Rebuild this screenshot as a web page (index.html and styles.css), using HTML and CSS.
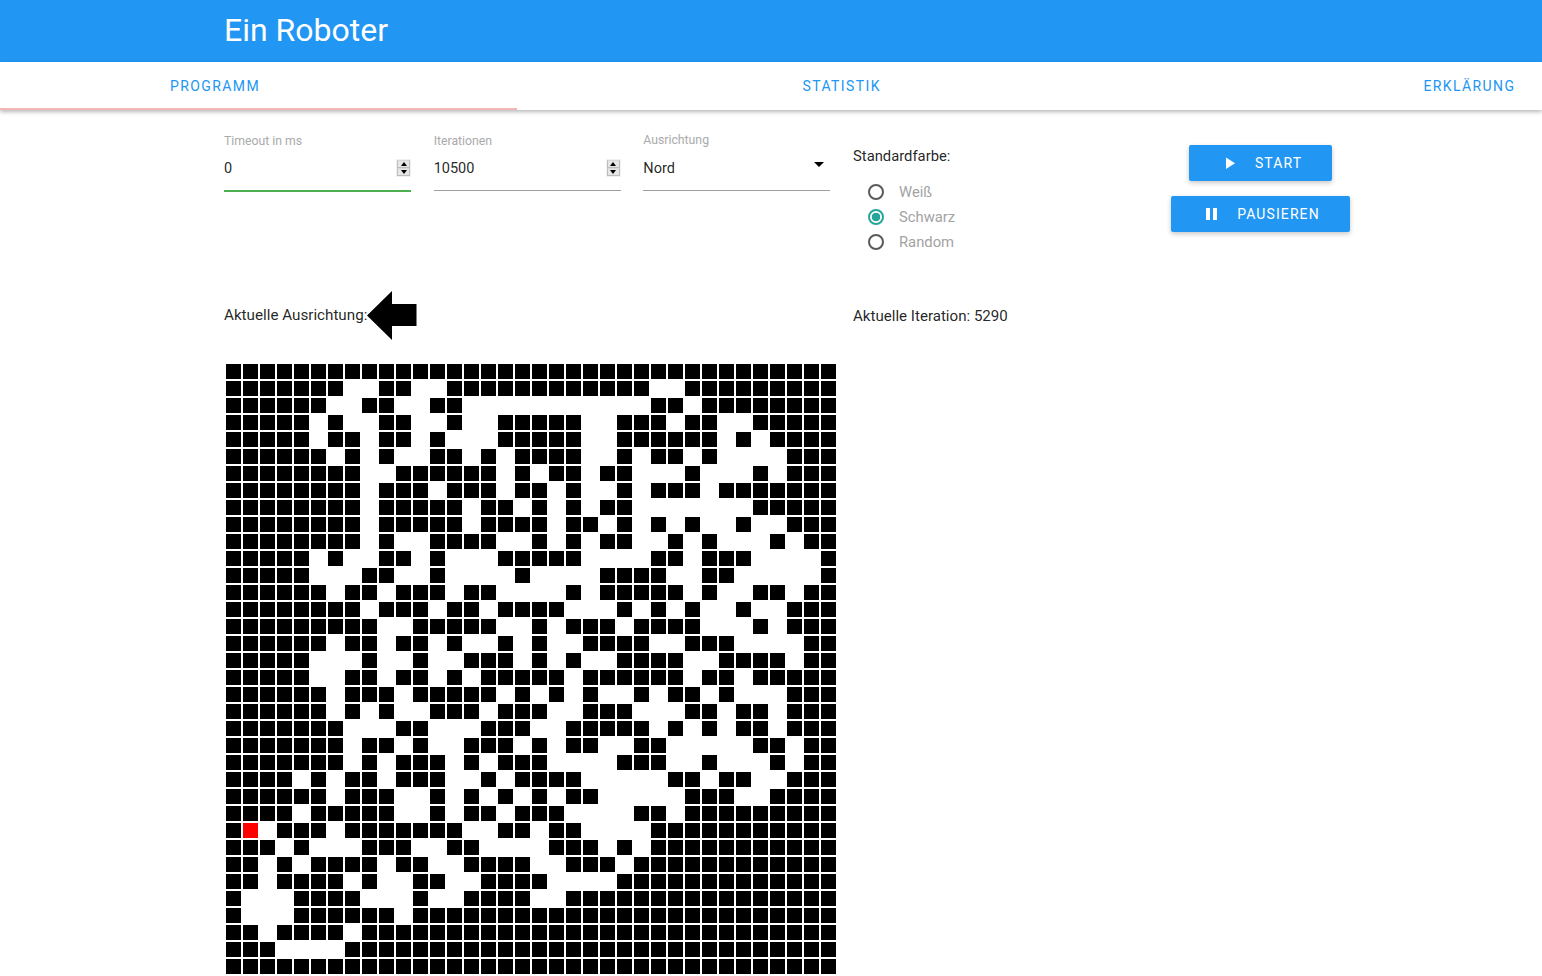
FILE: index.html
```html
<!DOCTYPE html>
<html lang="de">
<head>
<meta charset="utf-8">
<title>Ein Roboter</title>
<link rel="stylesheet" href="styles.css">
</head>
<body>
<header class="app-bar"><h1 class="app-title">Ein Roboter</h1></header>
<nav class="tabs">
  <a class="tab">PROGRAMM</a>
  <a class="tab">STATISTIK</a>
  <a class="tab">ERKLÄRUNG</a>
  <span class="ink-bar"></span>
</nav>
<main class="content">
  <section class="controls">
    <div class="fields">
      <label class="field field--focused">
        <span class="field-label">Timeout in ms</span>
        <span class="field-row">
          <input class="field-input" type="number" value="0">
          <span class="spinner"><span class="spin spin--up"></span><span class="spin spin--down"></span></span>
        </span>
      </label>
      <label class="field">
        <span class="field-label">Iterationen</span>
        <span class="field-row">
          <input class="field-input" type="number" value="10500">
          <span class="spinner"><span class="spin spin--up"></span><span class="spin spin--down"></span></span>
        </span>
      </label>
      <div class="field field--select">
        <span class="field-label">Ausrichtung</span>
        <div class="select-value">Nord<span class="select-caret"></span></div>
      </div>
    </div>
    <div class="colors">
      <div class="colors-title">Standardfarbe:</div>
      <div class="radio"><span class="radio-mark"></span><span class="radio-text">Weiß</span></div>
      <div class="radio radio--checked"><span class="radio-mark"></span><span class="radio-text">Schwarz</span></div>
      <div class="radio"><span class="radio-mark"></span><span class="radio-text">Random</span></div>
    </div>
    <div class="actions">
      <button class="btn" type="button">
        <svg class="btn-icon" viewBox="0 0 20 20"><path d="M7 4.500v11.500l9-5.750z"/></svg>START
      </button>
      <button class="btn" type="button">
        <svg class="btn-icon" viewBox="0 0 20 20"><path d="M5 4h4v12H5zM12 4h4v12h-4z"/></svg>PAUSIEREN
      </button>
    </div>
  </section>
  <section class="status">
    <div class="status-direction">
      <span class="status-text">Aktuelle Ausrichtung:</span>
      <svg class="arrow" viewBox="0 0 50 50"><path d="M0 24.500L25 0v13h24.500v22H25v14z"/></svg>
    </div>
    <div class="status-iteration">Aktuelle Iteration: 5290</div>
  </section>
  <div class="board" id="board"></div>
</main>
<script src="board.js"></script>
</body>
</html>
```

FILE: styles.css
```css
* { box-sizing: border-box; }
html, body { margin: 0; padding: 0; }
body {
  font-family: Roboto, "Liberation Sans", sans-serif;
  font-size: 14px;
  color: rgba(0, 0, 0, 0.87);
  background: #fff;
  overflow-x: hidden;
}
.app-bar {
  height: 62px;
  background: #2196f3;
  display: flex;
  align-items: center;
  padding: 0 0 2px 224px;
}
.app-title {
  margin: 0;
  font-size: 32px;
  font-weight: 400;
  color: #fff;
}
.tabs {
  position: relative;
  height: 48px;
  display: flex;
  justify-content: space-between;
  align-items: center;
  padding: 0 28px 0 170px;
  background: #fff;
  box-shadow: 0 2px 4px rgba(0, 0, 0, 0.28);
}
.tab {
  color: #2196f3;
  font-size: 14px;
  letter-spacing: 1.4px;
  margin-right: -1.4px;
}
.ink-bar {
  position: absolute;
  left: 0;
  bottom: 0;
  width: 517px;
  height: 2px;
  background: #f5b5b7;
}
.content { padding-left: 224px; }
.controls {
  display: flex;
  height: 181px;
}
.fields {
  display: grid;
  grid-template-columns: repeat(3, 187px);
  column-gap: 22.67px;
  align-self: flex-start;
  padding-top: 24px;
  width: 606px;
}
.field {
  display: block;
  height: 57px;
  border-bottom: 1px solid #9e9e9e;
}
.field--focused {
  border-bottom: 2px solid #4caf50;
  height: 58px;
}
.field-label {
  display: block;
  font-size: 12.25px;
  line-height: 14px;
  color: #aaa;
}
.field--select .field-label { margin-top: -1px; }
.field-row {
  display: flex;
  align-items: center;
  height: 28px;
  margin-top: 6px;
}
.field-input {
  flex: 1;
  min-width: 0;
  height: 28px;
  padding: 0;
  border: 0;
  outline: 0;
  background: transparent;
  font: inherit;
  font-size: 14.5px;
  color: rgba(0, 0, 0, 0.87);
  appearance: textfield;
}
.field-input::-webkit-inner-spin-button,
.field-input::-webkit-outer-spin-button { appearance: none; margin: 0; }
.spinner {
  display: flex;
  flex-direction: column;
  flex: none;
  width: 15px;
  height: 18px;
  padding: 1px 1px;
  background: #f1f1f1;
}
.spin {
  display: flex;
  flex: 1;
  align-items: center;
  justify-content: center;
  background: #e6e6e6;
  border: 1px solid #bdbdbd;
  border-top-color: #d8d8d8;
}
.spin--up::before,
.spin--down::before {
  content: "";
  border-style: solid;
  border-color: transparent;
}
.spin--up::before { border-width: 0 3.500px 4px; border-bottom-color: #000; }
.spin--down::before { border-width: 4px 3.500px 0; border-top-color: #000; }
.select-value {
  position: relative;
  height: 28px;
  margin-top: 8px;
  font-size: 14.5px;
  line-height: 28px;
}
.select-caret {
  position: absolute;
  right: 6px;
  top: 7px;
  border-style: solid;
  border-width: 5px 5px 0;
  border-color: #000 transparent transparent;
}
.colors {
  width: 210px;
  margin-left: 23px;
  padding-top: 38px;
}
.colors-title {
  font-size: 14.8px;
  line-height: 17px;
  margin-bottom: 14px;
}
.radio {
  display: flex;
  align-items: center;
  height: 25px;
  padding-left: 15px;
  font-size: 14.8px;
  color: #a3a3a3;
}
.radio-text { padding-top: 1px; }
.radio-mark {
  width: 16px;
  height: 16px;
  margin-right: 15px;
  border: 2px solid #5a5a5a;
  border-radius: 50%;
}
.radio--checked .radio-mark {
  border-color: #26a69a;
  background: radial-gradient(circle, #26a69a 0 4px, #fff 4.6px);
}
.actions {
  width: 395px;
  display: flex;
  flex-direction: column;
  align-items: center;
  gap: 15px;
  padding-top: 35px;
}
.btn {
  display: flex;
  align-items: center;
  height: 36px;
  padding: 0 30px;
  border: 0;
  border-radius: 2px;
  background: #2196f3;
  color: #fff;
  font: inherit;
  font-size: 14px;
  letter-spacing: 1.1px;
  box-shadow: 0 2px 5px rgba(0, 0, 0, 0.22);
}
.btn-icon {
  width: 20px;
  height: 20px;
  margin-right: 16px;
  fill: #fff;
}
.status { display: flex; height: 50px; }
.status-direction {
  display: flex;
  align-items: center;
  width: 629px;
  font-size: 15.2px;
}
.status-text { margin-top: -2px; }
.arrow { width: 50px; height: 50px; flex: none; }
.status-iteration {
  font-size: 15.1px;
  line-height: 50px;
}
.board {
  display: grid;
  grid-template-columns: repeat(36, 15px);
  grid-auto-rows: 15px;
  gap: 2px;
  width: 610px;
  margin: 23px 0 0 2px;
}
.cell { background: #fff; }
.cell--on { background: #000; }
.cell--robot { background: #f00; }
```

FILE: board.js
```js
// Each row is a run-length list: black, white, black, white ...
var rows = [
  [36],
  [7,2,2,2,12,2,9],
  [6,2,2,2,2,11,2,1,8],
  [5,1,1,2,2,2,1,2,5,2,3,1,2,2,5],
  [5,1,2,1,2,1,1,3,5,2,6,1,1,1,4],
  [6,1,1,1,1,2,2,1,1,1,4,2,1,1,2,1,1,4,3],
  [8,2,6,1,1,1,2,1,2,3,1,3,1,1,3],
  [8,1,3,1,3,1,2,1,1,2,1,1,3,1,7],
  [8,1,5,1,2,1,1,1,1,1,2,7,5],
  [8,1,5,1,4,1,2,1,1,1,1,1,1,2,1,2,3],
  [8,1,1,2,4,2,1,1,1,1,2,2,1,1,1,3,1,1,2],
  [5,1,1,2,2,1,1,3,5,4,2,1,3,4,1],
  [5,3,2,2,1,4,1,4,4,2,2,5,1],
  [6,1,2,1,3,1,2,4,1,1,5,1,1,2,2,1,2],
  [8,1,3,1,2,1,4,3,1,1,1,1,1,2,1,2,3],
  [9,2,5,2,1,1,3,1,4,3,1,1,3],
  [6,1,2,1,2,1,1,2,1,1,1,2,4,2,3,4,2],
  [5,3,1,2,1,2,3,1,1,1,1,2,4,2,4,1,2],
  [5,2,2,1,2,1,1,1,5,1,6,1,2,1,5],
  [6,1,3,1,5,1,1,1,1,1,1,2,1,1,2,1,1,3,3],
  [6,1,1,1,1,2,3,1,3,2,3,3,2,1,2,1,3],
  [7,3,2,3,3,2,5,1,1,1,1,1,2,1,3],
  [7,1,2,1,1,2,3,1,1,1,2,2,2,5,2,1,2],
  [7,1,1,1,3,1,1,1,3,4,3,2,1,3,1,1,2],
  [4,1,1,1,2,1,3,2,1,1,4,5,2,1,2,2,3],
  [6,1,3,2,1,1,1,1,1,1,1,1,2,5,3,2,4],
  [4,1,5,2,1,1,2,1,3,4,2,1,9],
  [2,1,3,1,7,2,2,1,2,4,11],
  [3,1,1,3,3,2,2,4,3,1,1,1,11],
  [2,1,1,1,4,1,2,2,4,2,3,1,12],
  [2,1,4,1,1,2,2,2,4,4,13],
  [1,3,4,3,1,2,4,2,16],
  [1,3,6,1,25],
  [2,1,4,1,28],
  [3,4,29],
  [36]
];
var robot = { row: 27, col: 1 };
var board = document.getElementById("board");
rows.forEach(function (runs, r) {
  var col = 0;
  runs.forEach(function (len, i) {
    for (var k = 0; k < len; k++, col++) {
      var cell = document.createElement("div");
      cell.className = "cell";
      if (r === robot.row && col === robot.col) cell.className += " cell--robot";
      else if (i % 2 === 0) cell.className += " cell--on";
      board.appendChild(cell);
    }
  });
});
```
